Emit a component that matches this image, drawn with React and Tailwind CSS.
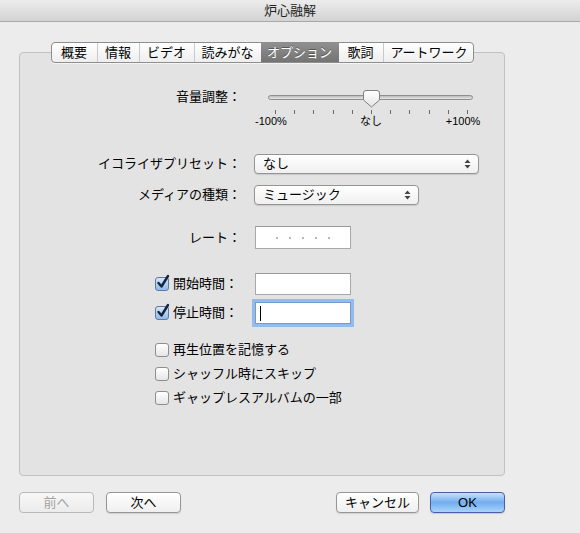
import React from "react";

const FONT = "font-['Liberation_Sans','Noto_Sans_CJK_JP',sans-serif]";

const tabs = [
  { t: "概要", w: "w-[45px]" },
  { t: "情報", w: "w-[42px]" },
  { t: "ビデオ", w: "w-[55px]" },
  { t: "読みがな", w: "w-[67px]" },
  { t: "オプション", w: "w-[78px]", sel: true },
  { t: "歌詞", w: "w-[44px]" },
  { t: "アートワーク", w: "w-[92px]" },
];

function Tabs() {
  return (
    <div className="relative z-10 mx-auto flex h-[21px] w-[423px] overflow-hidden rounded-[4px] border border-[#8e8e8e] bg-linear-to-b from-[#ffffff] to-[#eeeeee] shadow-[0_1px_0_rgba(255,255,255,0.6)]">
      {tabs.map((tab, i) => (
        <div
          key={tab.t}
          className={
            tab.w +
            " flex shrink-0 items-center justify-center text-[13px] leading-[18px] " +
            (tab.sel
              ? "bg-linear-to-b from-[#8f8f8f] to-[#747474] text-white [text-shadow:0_-1px_0_rgba(0,0,0,0.35)]"
              : "text-black ") +
            (i > 0 && !tab.sel && !tabs[i - 1].sel ? " border-l border-[#c9c9c9]" : "")
          }
        >
          {tab.t}
        </div>
      ))}
    </div>
  );
}

function Label({ children }) {
  return (
    <div className="w-[221px] shrink-0 text-right text-[13px] leading-[18px] text-black">
      {children}
    </div>
  );
}

function Arrows() {
  return (
    <svg width="7" height="10" viewBox="0 0 7 10" className="shrink-0">
      <path d="M3.5 0.5 L6.5 4 H0.5 Z" fill="#444" />
      <path d="M3.5 9.5 L6.5 6 H0.5 Z" fill="#444" />
    </svg>
  );
}

function Popup({ text, w, h }) {
  return (
    <div
      className={
        w +
        " " +
        h +
        " flex items-center justify-between rounded-[4px] border border-[#959595] bg-linear-to-b from-[#ffffff] to-[#f0f0f0] pl-[8px] pr-[7px] text-[13px] leading-[16px] text-black shadow-[0_1px_1px_rgba(0,0,0,0.12)]"
      }
    >
      <span>{text}</span>
      <Arrows />
    </div>
  );
}

function Checkbox({ checked }) {
  return (
    <div className="relative h-[14px] w-[14px] shrink-0">
      <div
        className={
          "h-[14px] w-[14px] rounded-[3px] border " +
          (checked
            ? "border-[#5f79a8] bg-linear-to-b from-[#d6e7f8] to-[#8fbbe7]"
            : "border-[#8d8d8d] bg-linear-to-b from-[#ffffff] to-[#e6e6e6]")
        }
      />
      {checked && (
        <svg
          width="14"
          height="16"
          viewBox="0 0 14 16"
          className="absolute left-[1px] top-[-3px]"
        >
          <path
            d="M2.5 9 L5.5 12.5 L12 2"
            fill="none"
            stroke="#16233d"
            strokeWidth="2.4"
            strokeLinecap="round"
            strokeLinejoin="round"
          />
        </svg>
      )}
    </div>
  );
}

function Slider() {
  const ticks = Array.from({ length: 11 });
  return (
    <div className="relative h-[40px] w-[230px]">
      <div className="absolute left-[14px] top-[7px] h-[5px] w-[205px] rounded-full border border-[#8f8f8f] bg-linear-to-b from-[#bdbdbd] to-[#e6e6e6]" />
      <svg
        width="19"
        height="19"
        viewBox="0 0 19 19"
        className="absolute left-[108px] top-[1px]"
      >
        <defs>
          <linearGradient id="th" x1="0" y1="0" x2="0" y2="1">
            <stop offset="0" stopColor="#ffffff" />
            <stop offset="1" stopColor="#e4e4e4" />
          </linearGradient>
        </defs>
        <path
          d="M1.5 4 Q1.5 1.5 4 1.5 H15 Q17.5 1.5 17.5 4 V11 L9.5 18 L1.5 11 Z"
          fill="url(#th)"
          stroke="#7f7f7f"
          strokeWidth="1"
        />
      </svg>
      <div className="absolute left-[21px] top-[22px] flex w-[193px] justify-between">
        {ticks.map((_, i) => (
          <div key={i} className="h-[4px] w-px bg-[#6a6a6a]" />
        ))}
      </div>
      <div className="absolute left-[-3px] top-[27px] w-[40px] text-center text-[11px] leading-[12px] text-black">
        -100%
      </div>
      <div className="absolute left-[97px] top-[27px] w-[40px] text-center text-[11px] leading-[12px] text-black">
        なし
      </div>
      <div className="absolute left-[189px] top-[27px] w-[40px] text-center text-[11px] leading-[12px] text-black">
        +100%
      </div>
    </div>
  );
}

function Button({ children, w, disabled, primary }) {
  let cls =
    w +
    " h-[21px] flex items-center justify-center rounded-[4px] border text-[13px] leading-[16px] ";
  if (primary) {
    cls +=
      "border-[#4a5fa6] bg-linear-to-b from-[#c8e0f9] via-[#72adef] to-[#a9d4fb] text-black shadow-[0_1px_1px_rgba(0,0,0,0.15)]";
  } else if (disabled) {
    cls +=
      "border-[#b9b9b9] bg-linear-to-b from-[#f7f7f7] to-[#ececec] text-[#a3a3a3]";
  } else {
    cls +=
      "border-[#969696] bg-linear-to-b from-[#ffffff] to-[#efefef] text-black shadow-[0_1px_1px_rgba(0,0,0,0.12)]";
  }
  return <div className={cls}>{children}</div>;
}

export default function App() {
  return (
    <div className={"h-[533px] w-[580px] overflow-hidden bg-[#ececec] " + FONT}>
      <div className="h-[22px] border-b border-[#a8a8a8] bg-linear-to-b from-[#ececec] to-[#d3d3d3] text-center text-[13px] leading-[21px] text-[#222]">
        炉心融解
      </div>

      <div className="ml-[19px] mt-[20px] w-[486px]">
        <Tabs />
        <div className="-mt-[11px] h-[424px] rounded-[4px] border border-[#c2c2c2] bg-[#e3e3e3] pt-[35px]">
          <div className="flex items-start gap-[13px]">
            <Label>音量調整：</Label>
            <Slider />
          </div>

          <div className="mt-[26px] flex items-center gap-[13px]">
            <Label>イコライザプリセット：</Label>
            <Popup text="なし" w="w-[225px]" h="h-[20px]" />
          </div>

          <div className="mt-[11px] flex items-center gap-[13px]">
            <Label>メディアの種類：</Label>
            <Popup text="ミュージック" w="w-[165px]" h="h-[20px]" />
          </div>

          <div className="mt-[21px] flex items-center gap-[14px]">
            <Label>レート：</Label>
            <div className="flex h-[23px] w-[96px] items-center justify-center gap-[11px] border border-[#a9a9a9] border-t-[#9a9a9a] bg-white">
              {[0, 1, 2, 3, 4].map((i) => (
                <div key={i} className="h-[2px] w-[2px] bg-[#b8b8b8]" />
              ))}
            </div>
          </div>

          <div className="mt-[24px] flex items-center">
            <div className="flex w-[235px] shrink-0 items-center pl-[135px]">
              <Checkbox checked />
              <span className="ml-[4px] text-[13px] leading-[18px] text-black">
                開始時間：
              </span>
            </div>
            <div className="h-[22px] w-[96px] border border-[#a9a9a9] border-t-[#9a9a9a] bg-white" />
          </div>

          <div className="mt-[7px] flex items-center">
            <div className="flex w-[235px] shrink-0 items-center pl-[135px]">
              <Checkbox checked />
              <span className="ml-[4px] text-[13px] leading-[18px] text-black">
                停止時間：
              </span>
            </div>
            <div className="flex h-[22px] w-[96px] items-center border border-[#7c98c4] bg-white pl-[4px] shadow-[0_0_0_3px_#93bbec]">
              <div className="h-[15px] w-px bg-black" />
            </div>
          </div>

          <div className="mt-[14px] flex flex-col pl-[135px]">
            {["再生位置を記憶する", "シャッフル時にスキップ", "ギャップレスアルバムの一部"].map(
              (t) => (
                <div key={t} className="flex h-[24px] items-center">
                  <Checkbox />
                  <span className="ml-[4px] text-[13px] leading-[18px] text-black">
                    {t}
                  </span>
                </div>
              )
            )}
          </div>
        </div>

        <div className="mt-[16px] flex justify-between">
          <div className="flex gap-[12px]">
            <Button w="w-[75px]" disabled>
              前へ
            </Button>
            <Button w="w-[75px]">次へ</Button>
          </div>
          <div className="flex gap-[11px]">
            <Button w="w-[83px]">キャンセル</Button>
            <Button w="w-[75px]" primary>
              OK
            </Button>
          </div>
        </div>
      </div>
    </div>
  );
}
